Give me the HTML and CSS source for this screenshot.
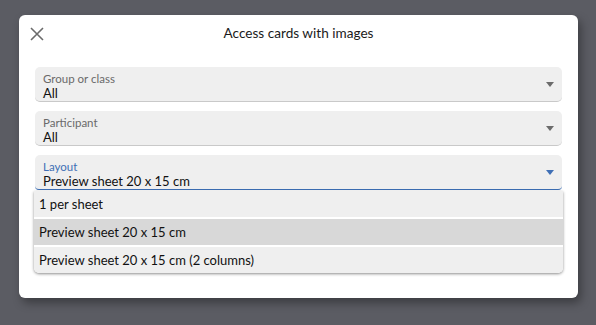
FILE: index.html
```html
<!DOCTYPE html>
<html lang="en">
<head>
    <meta charset="UTF-8">
    <meta name="viewport" content="width=device-width, initial-scale=1.0">
    <title>Access cards with images</title>
    <link rel="stylesheet" href="styles.css">
</head>
<body>
    <div class="dialog">
        <div class="dialog-header">
            <button class="close-button" aria-label="Close">
                <svg width="14" height="14" viewBox="0 0 14 14">
                    <path d="M1 1 L13 13 M13 1 L1 13" stroke="#6b6b6b" stroke-width="1.6" fill="none"/>
                </svg>
            </button>
            <h1>Access cards with images</h1>
        </div>

        <div class="dialog-body">
            <div class="select-field">
                <div class="select-text">
                    <span class="select-label">Group or class</span>
                    <span class="select-value">All</span>
                </div>
                <span class="select-arrow"></span>
            </div>

            <div class="select-field">
                <div class="select-text">
                    <span class="select-label">Participant</span>
                    <span class="select-value">All</span>
                </div>
                <span class="select-arrow"></span>
            </div>

            <div class="select-wrap">
                <div class="select-field focused">
                    <div class="select-text">
                        <span class="select-label">Layout</span>
                        <span class="select-value">Preview sheet 20 x 15 cm</span>
                    </div>
                    <span class="select-arrow"></span>
                </div>
                <ul class="menu">
                    <li class="menu-item">1 per sheet</li>
                    <li class="menu-item selected">Preview sheet 20 x 15 cm</li>
                    <li class="menu-item">Preview sheet 20 x 15 cm (2 columns)</li>
                </ul>
            </div>
        </div>
    </div>
</body>
</html>
```

FILE: styles.css
```css
body {
    font-family: 'Lato', 'Noto Sans', sans-serif;
    margin: 0;
    background-color: #5b5c63;
    min-height: 100vh;
}

.dialog {
    box-sizing: border-box;
    margin: 15px 0 0 19px;
    width: 559px;
    height: 283px;
    background-color: white;
    border-radius: 6px;
    box-shadow: 3px 5px 10px rgba(0, 0, 0, 0.35);
}

.dialog-header {
    position: relative;
    box-sizing: border-box;
    height: 52px;
    padding-top: 10px;
    display: flex;
    justify-content: center;
}

.dialog-header h1 {
    margin: 0;
    font-size: 13.6px;
    line-height: 16px;
    font-weight: normal;
    color: #1a1a1a;
}

.close-button {
    position: absolute;
    left: 7px;
    top: 8px;
    width: 22px;
    height: 22px;
    padding: 0;
    border: none;
    background: none;
    display: flex;
    align-items: center;
    justify-content: center;
    cursor: pointer;
}

.dialog-body {
    padding: 0 16px;
    display: flex;
    flex-direction: column;
    gap: 9px;
}

.select-wrap {
    position: relative;
}

.select-field {
    box-sizing: border-box;
    height: 35px;
    display: flex;
    align-items: center;
    padding: 0 8px;
    background-color: #efefef;
    border-radius: 5px;
    border-bottom: 1px solid #c9c9c9;
}

.select-field.focused {
    border-bottom: 1px solid #3b6db3;
    border-radius: 5px 5px 4px 4px;
}

.select-text {
    flex: 1;
    align-self: stretch;
    padding-top: 5px;
    display: flex;
    flex-direction: column;
}

.select-label {
    font-size: 11.5px;
    line-height: 14px;
    color: #6a6a6a;
}

.focused .select-label {
    color: #3f6fb5;
}

.select-value {
    font-size: 13px;
    line-height: 15px;
    color: #111;
}

.select-arrow {
    width: 0;
    height: 0;
    border-left: 4.5px solid transparent;
    border-right: 4.5px solid transparent;
    border-top: 5px solid #6b6b6b;
    margin-right: 0;
}

.focused .select-arrow {
    border-top-color: #3f6fb5;
}

.menu {
    position: absolute;
    top: 36px;
    left: -1px;
    right: -1px;
    margin: 0;
    padding: 0;
    list-style: none;
    background-color: white;
    border-radius: 0 0 5px 5px;
    box-shadow: 0 1px 3px rgba(0, 0, 0, 0.45);
    overflow: hidden;
}

.menu-item {
    height: 26px;
    display: flex;
    align-items: center;
    padding: 0 5px;
    font-size: 13px;
    color: #111;
    background-color: #efefef;
    border-top: 2px solid white;
}

.menu-item:first-child {
    border-top: none;
}

.menu-item.selected {
    background-color: #d8d8d8;
}
```
